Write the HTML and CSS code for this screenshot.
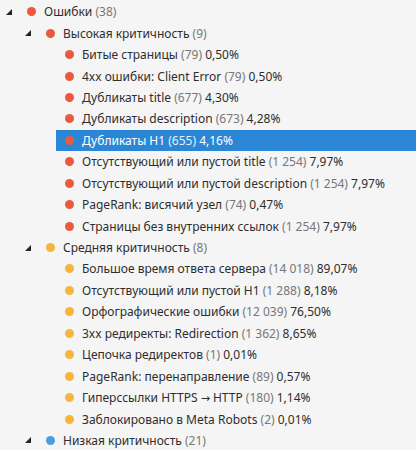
FILE: index.html
```html
<!DOCTYPE html>
<html>
<head>
<meta charset="utf-8">
<link rel="stylesheet" href="styles.css">
</head>
<body>
<div class="tree">
  <div class="row l0"><span class="tog"><svg width="6" height="6" viewBox="0 0 6 6"><polygon points="6,0 6,6 0,6" fill="#222"/></svg></span><span class="dot red"></span><span class="lbl">Ошибки <span class="cnt">(38)</span></span></div>
  <div class="row l1"><span class="tog"><svg width="6" height="6" viewBox="0 0 6 6"><polygon points="6,0 6,6 0,6" fill="#222"/></svg></span><span class="dot red"></span><span class="lbl">Высокая критичность <span class="cnt">(9)</span></span></div>
  <div class="row l2"><span class="dot red"></span><span class="lbl">Битые страницы <span class="cnt">(79)</span> 0,50%</span></div>
  <div class="row l2"><span class="dot red"></span><span class="lbl">4xx ошибки: Client Error <span class="cnt">(79)</span> 0,50%</span></div>
  <div class="row l2"><span class="dot red"></span><span class="lbl">Дубликаты title <span class="cnt">(677)</span> 4,30%</span></div>
  <div class="row l2"><span class="dot red"></span><span class="lbl">Дубликаты description <span class="cnt">(673)</span> 4,28%</span></div>
  <div class="row l2 sel"><span class="dot red"></span><span class="lbl">Дубликаты H1 <span class="cnt">(655)</span> 4,16%</span></div>
  <div class="row l2"><span class="dot red"></span><span class="lbl">Отсутствующий или пустой title <span class="cnt">(1 254)</span> 7,97%</span></div>
  <div class="row l2"><span class="dot red"></span><span class="lbl">Отсутствующий или пустой description <span class="cnt">(1 254)</span> 7,97%</span></div>
  <div class="row l2"><span class="dot red"></span><span class="lbl">PageRank: висячий узел <span class="cnt">(74)</span> 0,47%</span></div>
  <div class="row l2"><span class="dot red"></span><span class="lbl">Страницы без внутренних ссылок <span class="cnt">(1 254)</span> 7,97%</span></div>
  <div class="row l1"><span class="tog"><svg width="6" height="6" viewBox="0 0 6 6"><polygon points="6,0 6,6 0,6" fill="#222"/></svg></span><span class="dot orange"></span><span class="lbl">Средняя критичность <span class="cnt">(8)</span></span></div>
  <div class="row l2"><span class="dot orange"></span><span class="lbl">Большое время ответа сервера <span class="cnt">(14 018)</span> 89,07%</span></div>
  <div class="row l2"><span class="dot orange"></span><span class="lbl">Отсутствующий или пустой H1 <span class="cnt">(1 288)</span> 8,18%</span></div>
  <div class="row l2"><span class="dot orange"></span><span class="lbl">Орфографические ошибки <span class="cnt">(12 039)</span> 76,50%</span></div>
  <div class="row l2"><span class="dot orange"></span><span class="lbl">3xx редиректы: Redirection <span class="cnt">(1 362)</span> 8,65%</span></div>
  <div class="row l2"><span class="dot orange"></span><span class="lbl">Цепочка редиректов <span class="cnt">(1)</span> 0,01%</span></div>
  <div class="row l2"><span class="dot orange"></span><span class="lbl">PageRank: перенаправление <span class="cnt">(89)</span> 0,57%</span></div>
  <div class="row l2"><span class="dot orange"></span><span class="lbl">Гиперссылки HTTPS <span class="arrow">→</span> HTTP <span class="cnt">(180)</span> 1,14%</span></div>
  <div class="row l2"><span class="dot orange"></span><span class="lbl">Заблокировано в Meta Robots <span class="cnt">(2)</span> 0,01%</span></div>
  <div class="row l1"><span class="tog"><svg width="6" height="6" viewBox="0 0 6 6"><polygon points="6,0 6,6 0,6" fill="#222"/></svg></span><span class="dot blue"></span><span class="lbl">Низкая критичность <span class="cnt">(21)</span></span></div>
</div>
</body>
</html>
```
FILE: styles.css
```css
html, body {
  margin: 0;
  padding: 0;
  background: #f5f5f5;
}
body {
  font-family: "Noto Sans", "Open Sans", sans-serif;
  font-size: 12px;
  color: #2e2e2e;
  overflow: hidden;
}
.tree {
  padding-top: 1px;
}
.row {
  display: flex;
  align-items: center;
  height: 21.45px;
  white-space: nowrap;
}
.row.l0 { padding-left: 6px; }
.row.l1 { padding-left: 25px; }
.row.l2 { padding-left: 65px; }
.tog {
  width: 6px;
  height: 6px;
  display: flex;
  margin-right: 15px;
}
.tog svg { display: block; }
.dot {
  width: 9px;
  height: 9px;
  border-radius: 50%;
  flex: none;
  margin-right: 8px;
}
.red { background: #ea5a3f; }
.orange { background: #f7b43e; }
.blue { background: #4c9de0; }
.cnt { color: #777; }
.arrow {
  font-family: "DejaVu Sans", sans-serif;
  font-size: 11px;
}
.row.sel {
  background: #2b87d6;
  color: #fff;
  margin-left: 56px;
  padding-left: 9px;
}
.row.sel .cnt { color: #e6f0fa; }
```
